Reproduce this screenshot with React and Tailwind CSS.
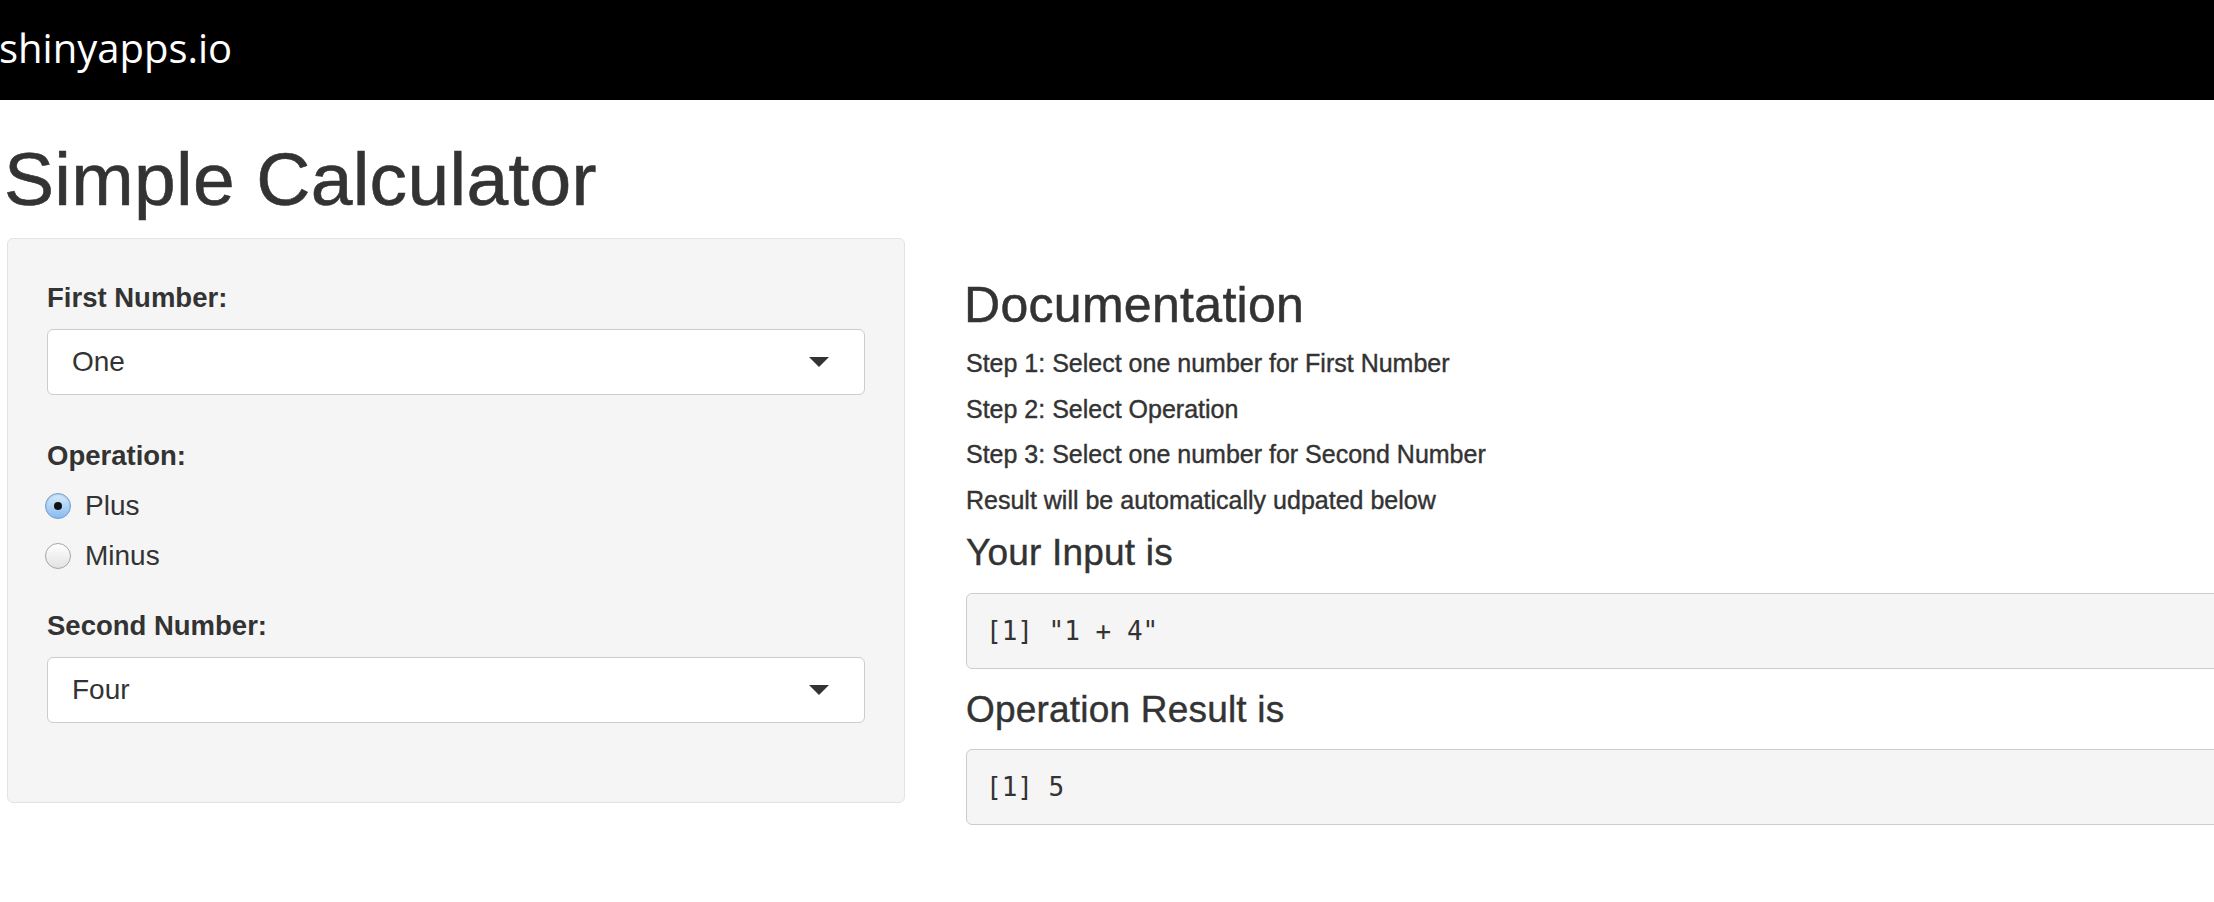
import React from 'react';

function Caret() {
  return (
    <svg width="20" height="10" viewBox="0 0 20 10" className="shrink-0">
      <path d="M0 0 L20 0 L10 10 Z" fill="#333" />
    </svg>
  );
}

function SelectBox({ value }) {
  return (
    <div className="mt-[18px] flex h-[66px] items-center justify-between rounded-[6px] border border-[#cccccc] bg-white pl-[24px] pr-[35px]">
      <span className="text-[28px] leading-[28px]">{value}</span>
      <Caret />
    </div>
  );
}

function Radio({ label, checked }) {
  return (
    <div className="flex h-[50px] items-center">
      {checked ? (
        <span className="ml-[-2px] flex h-[26px] w-[26px] items-center justify-center rounded-full border border-[#6d9dd4] bg-linear-to-b from-[#d9ecfd] to-[#88bbf0] shadow-[inset_0_1px_2px_rgba(0,0,0,0.15)]">
          <span className="h-[8px] w-[8px] rounded-full bg-[#111]" />
        </span>
      ) : (
        <span className="ml-[-2px] h-[26px] w-[26px] rounded-full border border-[#a5a5a5] bg-linear-to-b from-white to-[#e2e2e2] shadow-[inset_0_1px_1px_rgba(255,255,255,0.9)]" />
      )}
      <span className="ml-[14px] text-[28px] leading-[28px]">{label}</span>
    </div>
  );
}

function Well({ children, className }) {
  return (
    <div className={`flex h-[76px] items-center rounded-[6px] border border-[#cccccc] bg-[#f5f5f5] pl-[19px] ${className}`}>
      <span className="font-['DejaVu_Sans_Mono','Liberation_Mono',monospace] text-[26px] leading-[26px] whitespace-pre">
        {children}
      </span>
    </div>
  );
}

export default function App() {
  const steps = [
    'Step 1: Select one number for First Number',
    'Step 2: Select Operation',
    'Step 3: Select one number for Second Number',
    'Result will be automatically udpated below',
  ];

  return (
    <div className="min-h-screen w-full overflow-hidden bg-white font-['Liberation_Sans',Arial,sans-serif] text-[#333]">
      {/* Top bar */}
      <nav className="h-[100px] bg-black pt-[22px]">
        <span className="ml-[-1px] block font-['Open_Sans',sans-serif] text-[40px] leading-[52px] text-white">
          shinyapps.io
        </span>
      </nav>

      <main className="px-[7px]">
        <h2 className="ml-[-3px] mt-[42px] text-[75px] leading-[74px] tracking-[0.3px] [-webkit-text-stroke:0.6px_#333]">
          Simple Calculator
        </h2>

        <div className="mt-[22px] flex items-start">
          {/* Sidebar panel */}
          <div className="w-[898px] shrink-0 rounded-[6px] border border-[#e3e3e3] bg-[#f5f5f5] px-[39px] pt-[45px] pb-[79px]">
            <label className="block text-[27.5px] font-bold leading-[27px]">First Number:</label>
            <SelectBox value="One" />

            <label className="mt-[47px] block text-[27.5px] font-bold leading-[27px]">Operation:</label>
            <div className="mt-[12px]">
              <Radio label="Plus" checked />
              <Radio label="Minus" />
            </div>

            <label className="mt-[31px] block text-[27.5px] font-bold leading-[27px]">Second Number:</label>
            <SelectBox value="Four" />
          </div>

          {/* Main panel */}
          <div className="ml-[61px] w-[1300px] shrink-0">
            <h3 className="ml-[-2px] mt-[42px] text-[50px] leading-[50px] tracking-[0.3px] [-webkit-text-stroke:0.5px_#333]">
              Documentation
            </h3>
            <div className="mt-[11px]">
              {steps.map((s) => (
                <p key={s} className="text-[25px] leading-[45.5px] [-webkit-text-stroke:0.4px_#333]">{s}</p>
              ))}
            </div>

            <h4 className="mt-[11px] text-[37px] leading-[37px] tracking-[0.2px] [-webkit-text-stroke:0.4px_#333]">Your Input is</h4>
            <Well className="mt-[22px]">[1] "1 + 4"</Well>

            <h4 className="mt-[22px] text-[37px] leading-[37px] tracking-[0.2px] [-webkit-text-stroke:0.4px_#333]">Operation Result is</h4>
            <Well className="mt-[21px]">[1] 5</Well>
          </div>
        </div>
      </main>
    </div>
  );
}
